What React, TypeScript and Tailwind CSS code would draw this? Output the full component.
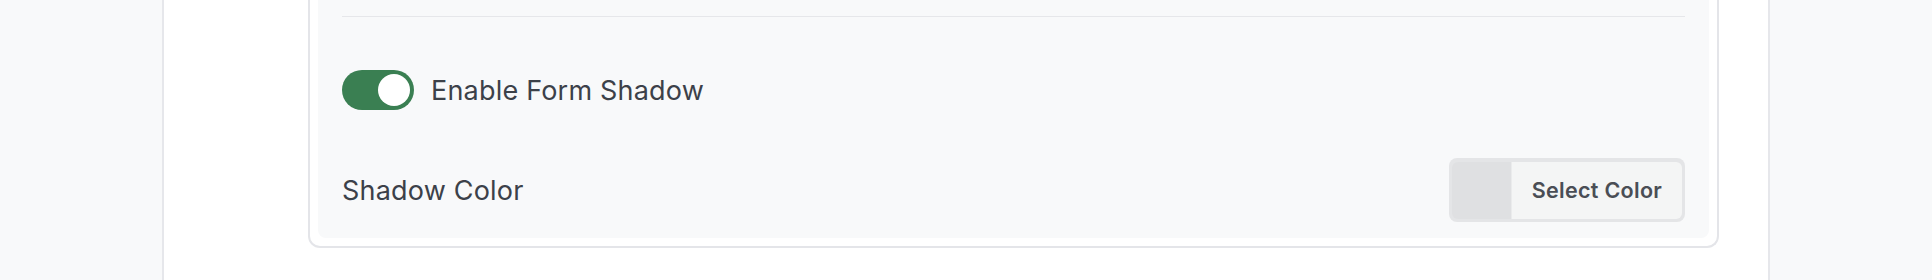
import React, { useState } from "react";

const App = () => {
  const [shadow, setShadow] = useState(true);

  return (
    <div
      className="flex h-[280px] w-full bg-[#f8f9fa] text-[#3c4149]"
      style={{ fontFamily: "Inter, 'Noto Sans', sans-serif" }}
    >
      {/* left rail */}
      <div className="w-[164px] shrink-0 border-r-2 border-[#e6e7eb] bg-[#f8f9fa]" />

      {/* main column */}
      <div className="flex-1 bg-white">
        <div className="ml-[144px] w-[1411px] rounded-b-xl border-2 border-t-0 border-[#e4e5e9] px-2 pb-2">
          <div className="rounded-b-lg bg-[#f8f9fa] px-[24px] pt-4 pb-4">
            <div className="h-px bg-[#e6e7ea]" />

            <div className="mt-[53px] flex h-10 items-center gap-[17px]">
              <button
                onClick={() => setShadow(!shadow)}
                className={
                  shadow
                    ? "flex h-10 w-[72px] items-center justify-end rounded-full bg-[#3a7f52] px-1"
                    : "flex h-10 w-[72px] items-center justify-start rounded-full bg-[#d1d5db] px-1"
                }
              >
                <span className="block size-8 rounded-full bg-white" />
              </button>
              <span className="text-[27px] leading-none tracking-[0.2px]">Enable Form Shadow</span>
            </div>

            <div className="mt-12 flex h-16 items-center justify-between">
              <span className="text-[27px] leading-none tracking-[0.2px]">Shadow Color</span>
              <div className="flex h-16 w-[236px] rounded-lg bg-[#e4e5e7] p-[3px] pt-1">
                <div className="w-[59px] rounded-l-md bg-[#dfe0e2]" />
                <button className="flex flex-1 items-center justify-center rounded-r-md border-l border-[#eaebec] bg-[#f4f5f5] text-[21.5px] font-semibold tracking-[0.3px] text-[#4a4e55]">
                  Select Color
                </button>
              </div>
            </div>
          </div>
        </div>
      </div>

      {/* right rail */}
      <div className="w-[164px] shrink-0 border-l-2 border-[#e6e7eb] bg-[#f8f9fa]" />
    </div>
  );
};

export default App;
